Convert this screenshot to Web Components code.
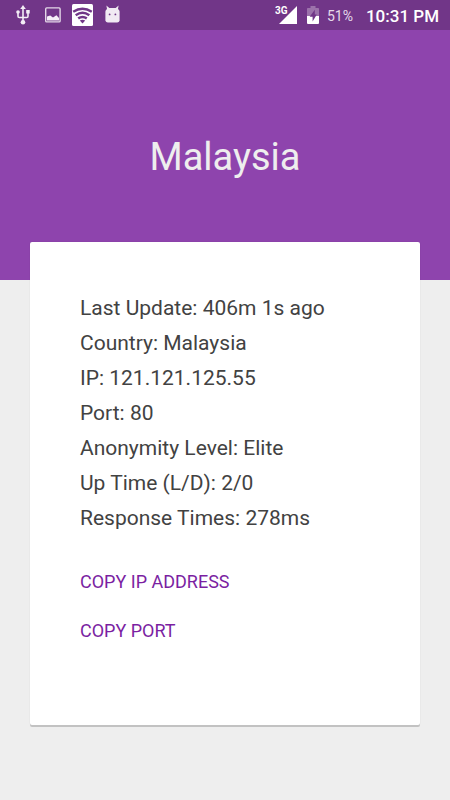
<!DOCTYPE html>
<html lang="en">
<head>
<meta charset="utf-8">
<meta name="viewport" content="width=device-width, initial-scale=1">
<title>Malaysia</title>
<style>
html, body { margin: 0; min-height: 100%; background: #eeeeee; }
body { font-family: Roboto, "Liberation Sans", sans-serif; color: #424242; }
</style>
</head>
<body>
<proxy-screen></proxy-screen>
<script>
function define(name, html) {
  const template = document.createElement('template');
  template.innerHTML = html;
  customElements.define(name, class extends HTMLElement {
    constructor() {
      super();
      this.attachShadow({ mode: 'open' }).append(template.content.cloneNode(true));
    }
  });
}

define('status-bar', `
<style>
:host { display: flex; justify-content: space-between; align-items: center; height: 30px; padding: 0 11px 0 12px; background: #713688; color: #fff; }
.group { display: flex; align-items: center; }
svg { display: block; flex: none; }
.left { gap: 8px; }
.net { margin-right: 10px; }
.battery { margin-right: 8px; }
.percent { font-size: 14px; line-height: 30px; color: #e6dbea; margin-right: 13px; padding-top: 1px; }
.time { font-size: 17px; font-weight: 500; line-height: 30px; padding-top: 1px; }
</style>
<div class="group left">
  <svg width="22" height="30" viewBox="0 0 22 30" role="img" aria-label="USB connected">
    <path d="M11 8V22M6 13v3.2q0 1.3 1.3 1.3H14.7q1.3 0 1.3-1.3V12" fill="none" stroke="#f3edf5" stroke-width="1.6"/>
    <g fill="#f3edf5"><path d="M11 5l2.8 4H8.2z"/><circle cx="6" cy="12" r="1.8"/><path d="M14.2 10h3.5v3.5h-3.5z"/><circle cx="11" cy="22.3" r="2.3"/></g>
  </svg>
  <svg width="22" height="30" viewBox="0 0 22 30" role="img" aria-label="Picture">
    <rect x="3.7" y="7.9" width="14.4" height="14" rx="1" fill="none" stroke="#e3d7e7" stroke-width="1.4"/>
    <path d="M5 20.5V16.5L8.2 15.5 11 17.4 14.4 15.2 17 18v2.5z" fill="#f5eff7"/>
  </svg>
  <svg width="22" height="30" viewBox="0 0 22 30" role="img" aria-label="Wi-Fi">
    <rect x="0" y="4" width="21" height="22" rx="1.5" fill="#fff"/>
    <g fill="none" stroke="#713688" stroke-width="2.5"><path d="M1.2 11.7Q10.5 5.7 19.8 11.7"/><path d="M3.7 15.2Q10.5 10.4 17.3 15.2"/><path d="M6.2 18.4Q10.5 15.4 14.8 18.4"/></g>
    <path d="M7.8 20.6Q10.5 18.8 13.2 20.6L10.5 23.4z" fill="#713688"/>
  </svg>
  <svg width="22" height="30" viewBox="0 0 22 30" role="img" aria-label="Android">
    <path d="M3.4 20.7V11.5Q3.4 10 5 9L4.4 5.6 7.3 8.1H13.7L16.6 5.6 16 9Q17.6 10 17.6 11.5V20.7Q17 22.4 15.2 22.4H5.8Q4 22.4 3.4 20.7z" fill="#f1eaf3"/>
    <circle cx="7.6" cy="14.4" r=".9" fill="#713688"/><circle cx="13.4" cy="14.4" r=".9" fill="#713688"/>
  </svg>
</div>
<div class="group">
  <svg class="net" width="22" height="30" viewBox="0 0 22 30" role="img" aria-label="Mobile signal">
    <path d="M22 6V24H4z" fill="#fff"/>
    <text x="0" y="14" font-family="Roboto, sans-serif" font-size="10" font-weight="700" fill="#fff" stroke="#713688" stroke-width="2" paint-order="stroke">3G</text>
  </svg>
  <svg class="battery" width="12" height="30" viewBox="0 0 12 30" role="img" aria-label="Battery charging">
    <path d="M0 16V8.8Q0 8 .8 8H3.5V6H8.5V8h2.7q.8 0 .8.8V16z" fill="#9c72ab"/>
    <path d="M0 16H12V23q0 1-1 1H1q-1 0-1-1z" fill="#fff"/>
    <path d="M7.8 9.8L2.7 16.8H5.6V21.5L9.8 14.5H7.8z" fill="#713688"/>
  </svg>
  <span class="percent">51%</span>
  <span class="time">10:31 PM</span>
</div>`);

define('page-header', `
<style>
:host { display: block; background: #8e44ad; text-align: center; padding: 102px 16px 98px; }
h1 { margin: 0; font-size: 38px; line-height: 50px; font-weight: 400; color: #eeeeee; }
</style>
<h1><slot></slot></h1>`);

define('detail-card', `
<style>
:host { display: block; position: relative; margin: -38px 30px 0; padding: 49px 50px 70px; background: #fff; border-radius: 2px; box-shadow: 0 2px 0 #c2c2c2, 0 0 1px rgba(0,0,0,.2); }
.actions { display: flex; flex-direction: column; align-items: flex-start; margin-top: 21px; }
</style>
<slot></slot>
<div class="actions"><slot name="action"></slot></div>`);

define('detail-row', `
<style>
:host { display: block; font-size: 21px; line-height: 35px; color: #424242; }
</style>
<slot></slot>`);

define('text-action', `
<style>
:host { display: block; }
button { display: block; margin: 0; padding: 0; border: 0; background: none; font: inherit; font-size: 18px; line-height: 49px; color: #7b1fa2; text-transform: uppercase; cursor: pointer; }
</style>
<button type="button"><slot></slot></button>`);

define('proxy-screen', `
<style>
:host { display: block; padding-bottom: 75px; }
</style>
<status-bar></status-bar>
<page-header>Malaysia</page-header>
<detail-card>
  <detail-row>Last Update: 406m 1s ago</detail-row>
  <detail-row>Country: Malaysia</detail-row>
  <detail-row>IP: 121.121.125.55</detail-row>
  <detail-row>Port: 80</detail-row>
  <detail-row>Anonymity Level: Elite</detail-row>
  <detail-row>Up Time (L/D): 2/0</detail-row>
  <detail-row>Response Times: 278ms</detail-row>
  <text-action slot="action">Copy IP Address</text-action>
  <text-action slot="action">Copy Port</text-action>
</detail-card>`);
</script>
</body>
</html>
